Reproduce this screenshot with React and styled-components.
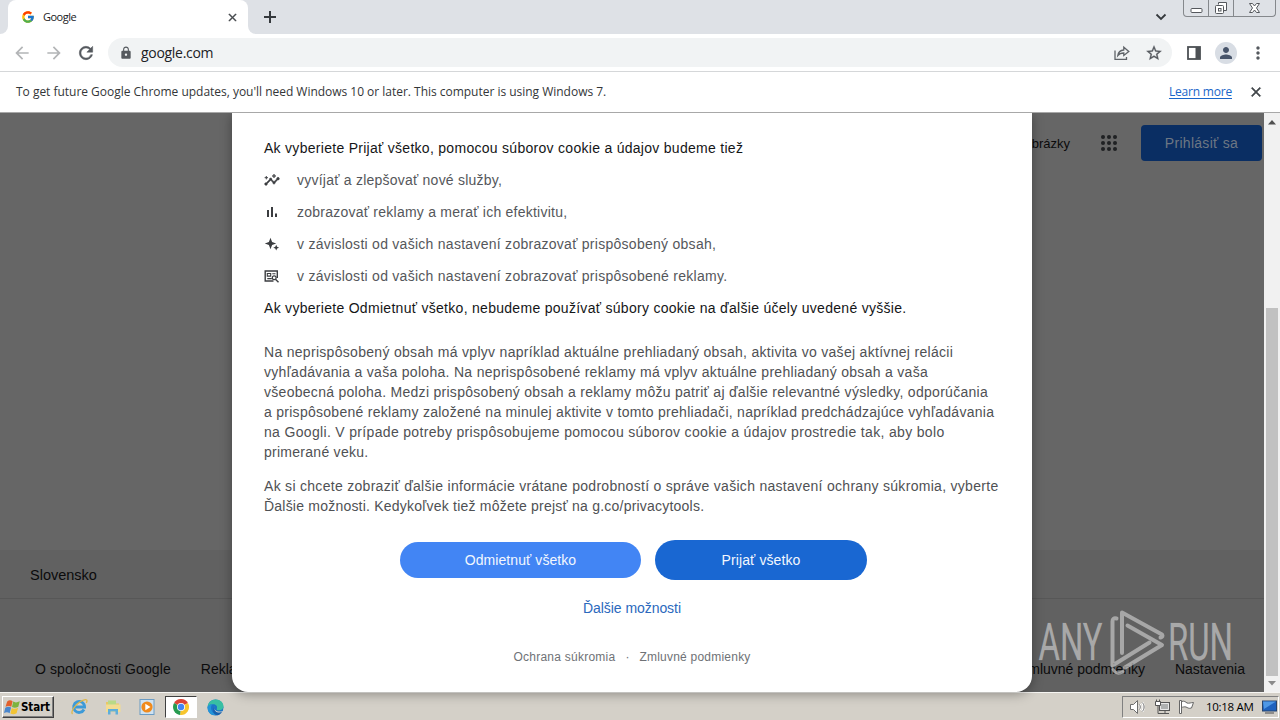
import React from "react";
import styled, { createGlobalStyle, css } from "styled-components";
import { FcGoogle } from "react-icons/fc";
import {
  MdArrowBack,
  MdArrowForward,
  MdClose,
  MdInsights,
  MdLock,
  MdMoreVert,
  MdPerson,
  MdRefresh,
  MdStarBorder,
} from "react-icons/md";

const GlobalStyle = createGlobalStyle`
  * {
    box-sizing: border-box;
  }
  body {
    margin: 0;
    overflow: hidden;
  }
`;

const uiFont = `"Open Sans", "Noto Sans", sans-serif`;
const pageFont = `"Liberation Sans", Arial, sans-serif`;

// the icons carry an invisible bounding path that must stay unstroked
const heavier = (width) => css`
  stroke: none;
  stroke-width: 0;
  path:not([fill="none"]) {
    stroke: currentColor;
    stroke-width: ${width}px;
  }
`;

const Screen = styled.div`
  position: relative;
  display: flex;
  flex-direction: column;
  width: 1280px;
  height: 720px;
  overflow: hidden;
  background: #fff;
  font-family: ${uiFont};
`;

const Text = styled.span(
  ({ $size = 14, $spacing = 0 }) => css`
    white-space: nowrap;
    font-size: ${$size}px;
    letter-spacing: ${$spacing}px;
  `
);

/* tab strip */

const TabStrip = styled.div`
  display: flex;
  flex: none;
  height: 34px;
  background: #dee1e6;
  color: #3c4043;
`;

const StripEdge = styled.div`
  width: 8px;
  background: #fff;
  &::before {
    content: "";
    display: block;
    height: 34px;
    background: #dee1e6;
    border-bottom-right-radius: 8px;
  }
`;

const Tab = styled.div`
  display: flex;
  align-items: center;
  width: 240px;
  padding: 0 9px 0 13px;
  background: #fff;
  border-radius: 8px 8px 0 0;
  svg:last-child {
    margin-left: auto;
  }
`;

const TabTitle = styled(Text)`
  margin: 0 0 1px 8px;
  color: #202124;
`;

const StripRest = styled.div`
  flex: 1;
  background: #fff;
`;

const StripRestInner = styled.div`
  display: flex;
  justify-content: space-between;
  height: 34px;
  padding: 0 4px 0 13px;
  background: #dee1e6;
  border-bottom-left-radius: 8px;
`;

const NewTab = styled.svg`
  margin-top: 8px;
`;

const StripRight = styled.div`
  display: flex;
`;

const Chevron = styled.svg`
  margin: 8px 13px 0 0;
`;

const Caption = styled.div`
  display: flex;
  height: 17px;
  border: 1px solid #85888c;
  border-top: 0;
  border-radius: 0 0 4px 4px;
`;

const CaptionButton = styled.div`
  display: flex;
  justify-content: center;
  width: ${({ $width }) => $width}px;
  & + & {
    border-left: 1px solid #85888c;
  }
`;

/* toolbar */

const Toolbar = styled.div`
  display: flex;
  align-items: center;
  flex: none;
  height: 38px;
  padding: 0 12px;
  background: #fff;
  border-bottom: 1px solid #d5d7d9;
  color: #55595e;
`;

const NavIcons = styled.div`
  display: flex;
  gap: 12px;
  width: 96px;
  svg {
    flex: none;
  }
`;

const ReloadIcon = styled(MdRefresh)`
  ${heavier(0.6)}
`;

const StarIcon = styled(MdStarBorder)`
  ${heavier(0.4)}
`;

const Omnibox = styled.div`
  display: flex;
  flex: none;
  align-items: center;
  width: 1064px;
  height: 29px;
  padding: 0 9px 0 11px;
  background: #f1f3f4;
  border-radius: 15px;
`;

const Url = styled(Text)`
  flex: 1;
  margin-left: 8px;
  color: #202124;
`;

const OmniIcons = styled.div`
  display: flex;
  gap: 14px;
`;

const ToolIcons = styled.div`
  display: flex;
  align-items: center;
  margin-left: 15px;
`;

const Avatar = styled.div`
  display: flex;
  align-items: center;
  justify-content: center;
  width: 22px;
  height: 22px;
  margin: 0 11px 0 14px;
  border-radius: 50%;
  background: #d8dde4;
  color: #47546a;
`;

const InfoBar = styled.div`
  position: relative;
  z-index: 2;
  display: flex;
  align-items: center;
  flex: none;
  height: 41px;
  padding: 0 16px;
  background: #fff;
  border-bottom: 1px solid #a8a8a8;
  color: #333638;
  ${Text} {
    margin-bottom: 2px;
  }
`;

const InfoLink = styled(Text)`
  margin-left: auto;
  margin-right: 16px;
  color: #1a66c9;
  text-decoration: underline;
  text-underline-offset: 2px;
`;

const CloseIcon = styled(MdClose)`
  color: #43474b;
  ${heavier(0.8)}
`;

/* web page behind the dialog */

const Viewport = styled.div`
  position: relative;
  display: flex;
  flex: none;
  height: 579px;
  font-family: ${pageFont};
`;

const Page = styled.div`
  display: flex;
  flex-direction: column;
  flex: 1;
  background: #666;
  color: #0b0b0c;
`;

const PageHeader = styled.div`
  display: flex;
  align-items: center;
  justify-content: flex-end;
  height: 60px;
  padding-right: 2px;
`;

const AppsGrid = styled.svg`
  margin: 0 24px 0 31px;
`;

const SignIn = styled.div`
  display: flex;
  align-items: center;
  justify-content: center;
  width: 121px;
  height: 36px;
  border-radius: 4px;
  background: #0a2e63;
  color: #6d7784;
`;

const PageFooter = styled.div`
  margin-top: auto;
  height: 142px;
  background: #616161;
`;

const Country = styled.div`
  display: flex;
  align-items: center;
  height: 49px;
  padding: 2px 0 0 30px;
  border-bottom: 1px solid #575757;
`;

const FooterLinks = styled.div`
  display: flex;
  height: 93px;
  padding: 62px 19px 0 35px;
  line-height: 17px;
`;

const FooterGroup = styled.div`
  display: flex;
  gap: 30px;
  & + & {
    margin-left: auto;
  }
`;

const Scrollbar = styled.div`
  display: flex;
  flex-direction: column;
  align-items: center;
  justify-content: space-between;
  width: 16px;
  padding: 7px 0 6px;
  background: #f1f1f1;
`;

const Thumb = styled.div`
  width: 12px;
  height: 368px;
  margin: auto 0 5px;
  background: #c1c1c1;
`;

/* consent dialog */

const Dialog = styled.div`
  position: absolute;
  z-index: 1;
  top: 0;
  left: 232px;
  width: 800px;
  height: 579px;
  padding: 25px 32px 0;
  background: #fff;
  border-radius: 0 0 16px 16px;
  box-shadow: 0 2px 12px rgba(0, 0, 0, 0.35);
  color: #4f5154;
`;

const Heading = styled.div`
  height: 20px;
  line-height: 20px;
  color: #151617;
`;

const ReasonList = styled.div`
  display: flex;
  flex-direction: column;
  gap: 12px;
  padding: 12px 0;
`;

const Reason = styled.div`
  display: flex;
  align-items: center;
  height: 20px;
  color: #3b3d40;
  ${Text} {
    margin-left: 17px;
    color: #55575b;
  }
`;

const InsightsIcon = styled(MdInsights)`
  ${heavier(0.8)}
`;

const Paragraph = styled.div`
  display: flex;
  flex-direction: column;
  margin-top: ${({ $gap }) => $gap}px;
  line-height: 20px;
`;

const Buttons = styled.div`
  display: flex;
  align-items: center;
  gap: 14px;
  margin: 24px 0 0 136px;
`;

const PillButton = styled.div(
  ({ $primary }) => css`
    display: flex;
    align-items: center;
    justify-content: center;
    width: ${$primary ? 212 : 241}px;
    height: ${$primary ? 40 : 36}px;
    border-radius: 20px;
    background: ${$primary ? "#1967d2" : "#4285f4"};
    color: #f2f7fe;
  `
);

const MoreOptions = styled.div`
  margin-top: 18px;
  line-height: 20px;
  text-align: center;
  color: #2b69bd;
`;

const Legal = styled.div`
  display: flex;
  justify-content: center;
  gap: 10px;
  margin-top: 29px;
  line-height: 20px;
  color: #6f7276;
`;

const Watermark = styled.svg`
  position: absolute;
  z-index: 3;
  left: 1036px;
  top: 605px;
  overflow: visible;
`;

/* taskbar */

const Taskbar = styled.div`
  display: flex;
  align-items: center;
  flex: none;
  height: 28px;
  padding: 1px 1px 0 2px;
  background: #d4d0c8;
  border-top: 1px solid #f6f5f2;
`;

const StartButton = styled.div`
  display: flex;
  align-items: center;
  gap: 1px;
  width: 52px;
  height: 22px;
  padding-left: 1px;
  border: 1px solid;
  border-color: #fff #404040 #404040 #fff;
  box-shadow: inset -1px -1px #808080;
  font-family: "DejaVu Sans Condensed", "DejaVu Sans", sans-serif;
  font-weight: 700;
  color: #000;
  svg {
    flex: none;
  }
`;

const QuickLaunch = styled.div`
  display: flex;
  align-items: center;
  margin-left: 8px;
`;

const LaunchItem = styled.div(
  ({ $active }) => css`
    display: flex;
    align-items: center;
    justify-content: center;
    width: ${$active ? 32 : 34}px;
    height: 22px;
    ${$active &&
    css`
      margin: 0 1px;
      background: #fff;
      border: 1px solid;
      border-color: #404040 #fff #fff #404040;
    `}
  `
);

const Tray = styled.div`
  display: flex;
  align-items: center;
  gap: 7px;
  width: 157px;
  height: 22px;
  margin-left: auto;
  padding-left: 6px;
  border: 1px solid;
  border-color: #808080 #fff #fff #808080;
  color: #000;
  svg {
    flex: none;
  }
`;

const Clock = styled(Text)`
  width: 50px;
  margin: 0 0 1px 4px;
`;

const PlusIcon = () => (
  <NewTab width="18" height="18" viewBox="0 0 18 18">
    <path d="M9 3v12M3 9h12" stroke="#35393d" strokeWidth="2" />
  </NewTab>
);

const CaptionButtons = () => (
  <Caption>
    <CaptionButton $width={24}>
      <svg width="13" height="16" viewBox="0 0 13 16">
        <rect x="1" y="8.5" width="11" height="4" rx="1" fill="#fff" stroke="#55585d" />
      </svg>
    </CaptionButton>
    <CaptionButton $width={25}>
      <svg width="14" height="16" viewBox="0 0 14 16">
        <path d="M4.5 4.5v-2h8v8h-3" fill="#fff" stroke="#55585d" />
        <rect x="1.5" y="5.5" width="8" height="8" rx="1" fill="#fff" stroke="#55585d" />
        <rect x="4.5" y="8.5" width="2.5" height="2.5" fill="none" stroke="#55585d" />
      </svg>
    </CaptionButton>
    <CaptionButton $width={42}>
      <svg width="13" height="16" viewBox="0 0 13 16">
        <path
          d="M1.5 3.5h3l2 2.500 2-2.500h3L8.500 8l3 4.500h-3l-2-2.500-2 2.500h-3L4.500 8z"
          fill="#fff"
          stroke="#55585d"
        />
      </svg>
    </CaptionButton>
  </Caption>
);

const ShareIcon = () => (
  <svg width="18" height="18" viewBox="0 0 18 18" fill="none" stroke="#5f6368" strokeWidth="1.300">
    <path d="M2 6.500v8.800h11.500V13" />
    <path d="M4.800 11.500c.5-3.500 2.700-5.300 6-5.500V3.200l5 4.200-5 4V9c-2.800 0-4.500.6-6 2.500z" />
  </svg>
);

const SidePanelIcon = () => (
  <svg width="14" height="14" viewBox="0 0 14 14">
    <rect x="1" y="1" width="12" height="12" fill="none" stroke="#4c5054" strokeWidth="1.800" />
    <path d="M8.500 1H13v12H8.500z" fill="#4c5054" />
  </svg>
);

const AppsIcon = () => (
  <AppsGrid width="16" height="16" viewBox="0 0 16 16" fill="#1f2123">
    {[2, 8, 14].map((cy) =>
      [2, 8, 14].map((cx) => <circle key={`${cx}-${cy}`} cx={cx} cy={cy} r="2" />)
    )}
  </AppsGrid>
);

const BarsIcon = () => (
  <svg width="16" height="16" viewBox="0 0 16 16" fill="#3b3d40">
    <path d="M3 6h2v7H3zM7 3h2v10H7zM11 9.500h2V13h-2z" />
  </svg>
);

const SparkIcon = () => (
  <svg width="16" height="16" viewBox="0 0 16 16" fill="#3b3d40">
    <path d="M6.500 1.800 8.100 5.900 12.200 7.500 8.100 9.100 6.500 13.200 4.900 9.100.800 7.500 4.900 5.900z" />
    <path d="m12.200 8.800.9 2 2 .9-2 .9-.9 2-.9-2-2-.9 2-.9z" />
  </svg>
);

const AdSearchIcon = () => (
  <svg width="16" height="16" viewBox="0 0 16 16" fill="none" stroke="#3b3d40" strokeWidth="1.400">
    <path d="M9.500 13H1.200V3h12.100v7" />
    <path d="M3.300 5.500h3.400v2.600H3.300zM3.300 10.600h4.500M8.300 5.700h3.200" strokeWidth="1.100" />
    <circle cx="10.200" cy="9.800" r="1.900" strokeWidth="1.200" />
    <path d="m11.700 11.400 2.800 2.800" />
  </svg>
);

const FlagIcon = () => (
  <svg width="16" height="16" viewBox="0 0 16 16">
    <path d="M3.200 2.500c2-1.700 3.700-1.300 5.400-.3L7.300 7.800C5.700 6.800 4 6.500 1.500 7.800z" fill="#e2602c" />
    <path d="M9.200 2.600c2 1.200 3.900 1 6.600-.3l-1.500 5.500c-2.300 1.300-4.300 1.300-6.300.3z" fill="#7db33f" />
    <path d="M1.300 8.700C3.500 7.400 5.500 7.500 7.100 8.600l-1.500 5.600c-1.600-1.200-3.500-1.200-5.600-.2z" fill="#4a86cc" />
    <path d="M7.800 8.900c2 1.200 4.200 1.100 6.300-.2l-1.500 5.600c-2.100 1.200-4.200 1.200-6.200.2z" fill="#f2c434" />
  </svg>
);

const ExplorerIcon = () => (
  <svg width="18" height="18" viewBox="0 0 18 18" fill="none">
    <path d="M14 11.500A5.500 5.500 0 1 1 14.600 9H5" stroke="#3c9ad8" strokeWidth="2.800" />
    <path d="M2.500 16C-.5 13.500 8 3 15.500 1.700c2.200-.2 1.500 2 .8 3.300" stroke="#dfb748" strokeWidth="1.300" />
  </svg>
);

const FolderIcon = () => (
  <svg width="18" height="18" viewBox="0 0 18 18">
    <path d="M2 4h5l1 1.500h7V14H2z" fill="#e9c766" />
    <path d="M4 2.500h8V8H4z" fill="#b9d987" />
    <path d="M2 6.500h14.500V14H2z" fill="#f3dc92" />
    <path d="M4 16.500V11h10v5.500h-2.500V13.500H6.500v3z" fill="#5eaeda" />
  </svg>
);

const MediaIcon = () => (
  <svg width="18" height="18" viewBox="0 0 18 18">
    <rect x="2" y="1.500" width="14" height="15" fill="#cfe2f1" stroke="#6b9cc4" />
    <circle cx="9" cy="9" r="5.600" fill="#f08a1c" />
    <path d="M7.300 5.800v6.400L12.500 9z" fill="#fff" />
  </svg>
);

const ChromeIcon = () => (
  <svg width="16" height="16" viewBox="0 0 16 16">
    <path d="M8 8 1.070 4A8 8 0 0 1 14.930 4z" fill="#db4437" />
    <path d="M8 8 14.930 4A8 8 0 0 1 7 15.900z" fill="#f7c52d" />
    <path d="M8 8 7 15.900A8 8 0 0 1 1.070 4z" fill="#279b50" />
    <circle cx="8" cy="8" r="4" fill="#fff" />
    <circle cx="8" cy="8" r="3.200" fill="#4285f4" />
  </svg>
);

const EdgeIcon = () => (
  <svg width="17" height="17" viewBox="0 0 17 17">
    <circle cx="8.500" cy="8.500" r="8" fill="#1b74c8" />
    <path d="M.600 8C1 3.500 4.300.500 8.700.500c4.600 0 7.800 3.300 7.800 6.700 0 2.700-2 4.100-4.300 4.100-1.900 0-3-.700-2.300-1.900C10.800 6.800 8.300 5 5.500 5.300 3 5.500 1.200 6.700.600 8z" fill="#38bfa3" />
    <path d="M.600 8c.900-2 3.100-3 5-2.700C4 6.500 3.500 9 4.600 11.500 5.600 14 8 15.500 10.500 15.500 5 17.700.200 13.500.600 8z" fill="#2494d8" />
    <path d="M8 7.200c-1.700 2-.5 6.300 7.500 5.100l1.500 1-1 1.500C9.500 15 5.500 11 8 7.200z" fill="#d4d0c8" />
    <path d="M7.300 8c-1 4 3 6.700 7.700 5.100-1.200 2-3 3-5 3.200C6 15.500 5.300 11 7.300 8z" fill="#1860ad" />
  </svg>
);

const SpeakerIcon = () => (
  <svg width="18" height="16" viewBox="0 0 18 16" fill="none" stroke="#6e6e6e">
    <path d="M1.500 5.500h3l4-4v13l-4-4h-3z" fill="#fff" />
    <path d="M10.500 5.500c1 1.500 1 3.500 0 5M13.200 3.500c2 2.500 2 6.500 0 9" stroke="#fff" strokeWidth="2.500" />
    <path d="M10.500 5.500c1 1.500 1 3.500 0 5M13.200 3.500c2.500 2.500 2.500 6.500 0 9" />
  </svg>
);

const NetworkIcon = () => (
  <svg width="17" height="16" viewBox="0 0 17 16" fill="#fff" stroke="#555">
    <rect x="5.500" y="3.500" width="10" height="8" fill="#aeb0b0" />
    <path d="M6.500 4.500h8v6h-8z" fill="none" stroke="#e8e8e8" />
    <path d="M8 14.500h7M11 11.500v3" />
    <path d="M1.500 2.500h5v4h-5zM2.500.500v2M5.500.500v2" />
    <path d="M4 6.500v8h4" fill="none" />
  </svg>
);

const ActionFlag = () => (
  <svg width="17" height="16" viewBox="0 0 17 16" fill="#fff" stroke="#666">
    <path d="M1.500 1.500h2v13h-2zM3.500 2.500c3-1 4 .500 5.500 1.500 2 .700 4-.500 6.500-.500L13.500 9c-3 1-4-.500-5.500-1-1.500-.400-3 0-4.500.500" />
  </svg>
);

const DesktopIcon = () => (
  <svg width="16" height="14" viewBox="0 0 16 14">
    <rect x=".500" y="1" width="14" height="10" fill="#1e62bf" stroke="#28446c" />
    <path d="M1 1.500h13L2 9z" fill="#4e98e6" />
    <path d="M3 13h9" stroke="#777" strokeWidth="1.500" />
  </svg>
);

const WatermarkLogo = () => (
  <Watermark width="204" height="80" viewBox="0 0 204 80">
    <g
      fill="#c4c4c4"
      fillOpacity="0.720"
      stroke="#c4c4c4"
      strokeOpacity="0.300"
      strokeWidth="0.600"
      fontFamily="Roboto, sans-serif"
      fontSize="52"
    >
      <text x="2.500" y="54.500" textLength="64" lengthAdjust="spacingAndGlyphs">
        ANY
      </text>
      <text x="132" y="54.500" textLength="65" lengthAdjust="spacingAndGlyphs">
        RUN
      </text>
    </g>
    <g
      fill="none"
      stroke="#c4c4c4"
      strokeOpacity="0.700"
      strokeWidth="4"
      strokeLinejoin="round"
      strokeLinecap="round"
    >
      <path d="M86 48V7.500l40 22q1.500 2-1.500 3" />
      <path d="M91.500 20.500 126 40 89 62.500" />
      <path d="M80.500 13.500q-4-1-4 3V60.500L113.500 37.500" />
      <path d="M77 64.500q4 6 10 2" strokeWidth="3" />
    </g>
  </Watermark>
);

const reasons = [
  { icon: <InsightsIcon size={16} />, text: "vyvíjať a zlepšovať nové služby,", spacing: 0.23 },
  { icon: <BarsIcon />, text: "zobrazovať reklamy a merať ich efektivitu,", spacing: 0.24 },
  {
    icon: <SparkIcon />,
    text: "v závislosti od vašich nastavení zobrazovať prispôsobený obsah,",
    spacing: 0.27,
  },
  {
    icon: <AdSearchIcon />,
    text: "v závislosti od vašich nastavení zobrazovať prispôsobené reklamy.",
    spacing: 0.27,
  },
];

const details = [
  ["Na neprispôsobený obsah má vplyv napríklad aktuálne prehliadaný obsah, aktivita vo vašej aktívnej relácii", 0.3],
  ["vyhľadávania a vaša poloha. Na neprispôsobené reklamy má vplyv aktuálne prehliadaný obsah a vaša", 0.3],
  ["všeobecná poloha. Medzi prispôsobený obsah a reklamy môžu patriť aj ďalšie relevantné výsledky, odporúčania", 0.283],
  ["a prispôsobené reklamy založené na minulej aktivite v tomto prehliadači, napríklad predchádzajúce vyhľadávania", 0.277],
  ["na Googli. V prípade potreby prispôsobujeme pomocou súborov cookie a údajov prostredie tak, aby bolo", 0.33],
  ["primerané veku.", 0.27],
];

const moreInfo = [
  ["Ak si chcete zobraziť ďalšie informácie vrátane podrobností o správe vašich nastavení ochrany súkromia, vyberte", 0.295],
  ["Ďalšie možnosti. Kedykoľvek tiež môžete prejsť na g.co/privacytools.", 0.215],
];

function Lines({ lines, gap }) {
  return (
    <Paragraph $gap={gap}>
      {lines.map(([text, spacing]) => (
        <div key={text}>
          <Text $spacing={spacing}>{text}</Text>
        </div>
      ))}
    </Paragraph>
  );
}

function BrowserChrome() {
  return (
    <>
      <TabStrip>
        <StripEdge />
        <Tab>
          <FcGoogle size={14} />
          <TabTitle $size={11} $spacing={-0.5}>
            Google
          </TabTitle>
          <CloseIcon size={13} />
        </Tab>
        <StripRest>
          <StripRestInner>
            <PlusIcon />
            <StripRight>
              <Chevron width="18" height="18" viewBox="0 0 18 18">
                <path d="m4.500 6.500 4.500 4.500 4.500-4.500" fill="none" stroke="#35393d" strokeWidth="1.800" />
              </Chevron>
              <CaptionButtons />
            </StripRight>
          </StripRestInner>
        </StripRest>
      </TabStrip>
      <Toolbar>
        <NavIcons>
          <MdArrowBack size={20} color="#b3b5b7" />
          <MdArrowForward size={20} color="#b3b5b7" />
          <ReloadIcon size={20} />
        </NavIcons>
        <Omnibox>
          <MdLock size={14} />
          <Url $size={14} $spacing={-0.3}>
            google.com
          </Url>
          <OmniIcons>
            <ShareIcon />
            <StarIcon size={18} />
          </OmniIcons>
        </Omnibox>
        <ToolIcons>
          <SidePanelIcon />
          <Avatar>
            <MdPerson size={18} />
          </Avatar>
          <MdMoreVert size={20} />
        </ToolIcons>
      </Toolbar>
      <InfoBar>
        <Text $size={12} $spacing={-0.02}>
          To get future Google Chrome updates, you'll need Windows 10 or later. This computer is using Windows 7.
        </Text>
        <InfoLink $size={12} $spacing={-0.2}>
          Learn more
        </InfoLink>
        <CloseIcon size={16} />
      </InfoBar>
    </>
  );
}

function ConsentDialog() {
  return (
    <Dialog>
      <Heading>
        <Text $spacing={0.285}>Ak vyberiete Prijať všetko, pomocou súborov cookie a údajov budeme tiež</Text>
      </Heading>
      <ReasonList>
        {reasons.map(({ icon, text, spacing }) => (
          <Reason key={text}>
            {icon}
            <Text $spacing={spacing}>{text}</Text>
          </Reason>
        ))}
      </ReasonList>
      <Heading>
        <Text $spacing={0.29}>
          Ak vyberiete Odmietnuť všetko, nebudeme používať súbory cookie na ďalšie účely uvedené vyššie.
        </Text>
      </Heading>
      <Lines gap={24} lines={details} />
      <Lines gap={14} lines={moreInfo} />
      <Buttons>
        <PillButton>
          <Text $spacing={0.07}>Odmietnuť všetko</Text>
        </PillButton>
        <PillButton $primary>
          <Text $spacing={0.1}>Prijať všetko</Text>
        </PillButton>
      </Buttons>
      <MoreOptions>
        <Text $spacing={-0.06}>Ďalšie možnosti</Text>
      </MoreOptions>
      <Legal>
        <Text $size={12} $spacing={0.25}>
          Ochrana súkromia
        </Text>
        <Text $size={12}>·</Text>
        <Text $size={12} $spacing={0.22}>
          Zmluvné podmienky
        </Text>
      </Legal>
    </Dialog>
  );
}

function SearchPage() {
  return (
    <Viewport>
      <Page>
        <PageHeader>
          <Text $size={13}>Obrázky</Text>
          <AppsIcon />
          <SignIn>
            <Text $spacing={0.3}>Prihlásiť sa</Text>
          </SignIn>
        </PageHeader>
        <PageFooter>
          <Country>
            <Text $size={14.5}>Slovensko</Text>
          </Country>
          <FooterLinks>
            <FooterGroup>
              <Text $spacing={0.1}>O spoločnosti Google</Text>
              <Text>Reklama</Text>
            </FooterGroup>
            <FooterGroup>
              <Text>Zmluvné podmienky</Text>
              <Text>Nastavenia</Text>
            </FooterGroup>
          </FooterLinks>
        </PageFooter>
      </Page>
      <Scrollbar>
        <svg width="8" height="5" viewBox="0 0 8 5">
          <path d="M4 0l4 4.500H0z" fill="#505050" />
        </svg>
        <Thumb />
        <svg width="8" height="5" viewBox="0 0 8 5">
          <path d="M4 4.500 8 0H0z" fill="#8b8b8b" />
        </svg>
      </Scrollbar>
      <ConsentDialog />
    </Viewport>
  );
}

function WindowsTaskbar() {
  return (
    <Taskbar>
      <StartButton>
        <FlagIcon />
        <Text $size={11.5} $spacing={-0.1}>
          Start
        </Text>
      </StartButton>
      <QuickLaunch>
        <LaunchItem>
          <ExplorerIcon />
        </LaunchItem>
        <LaunchItem>
          <FolderIcon />
        </LaunchItem>
        <LaunchItem>
          <MediaIcon />
        </LaunchItem>
        <LaunchItem $active>
          <ChromeIcon />
        </LaunchItem>
        <LaunchItem>
          <EdgeIcon />
        </LaunchItem>
      </QuickLaunch>
      <Tray>
        <SpeakerIcon />
        <NetworkIcon />
        <ActionFlag />
        <Clock $size={11.5} $spacing={-0.3}>
          10:18 AM
        </Clock>
        <DesktopIcon />
      </Tray>
    </Taskbar>
  );
}

export default function App() {
  return (
    <Screen>
      <GlobalStyle />
      <BrowserChrome />
      <SearchPage />
      <WindowsTaskbar />
      <WatermarkLogo />
    </Screen>
  );
}
